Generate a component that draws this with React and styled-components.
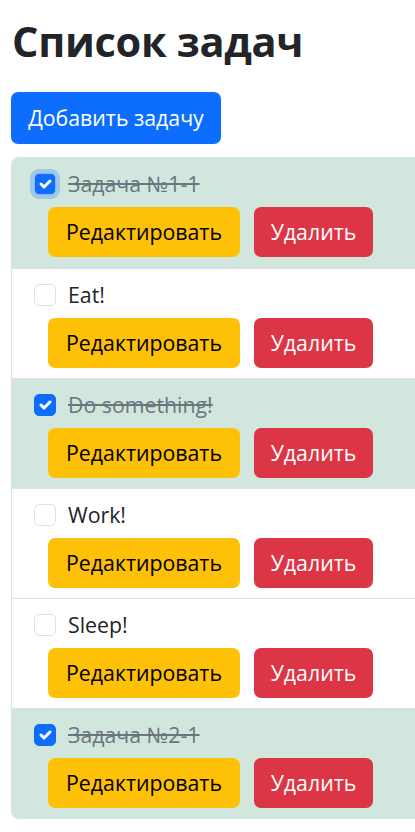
import React, { useState } from "react";
import styled, { createGlobalStyle } from "styled-components";

const Global = createGlobalStyle`
  html, body { margin: 0; padding: 0; background: #fff; overflow-x: hidden; }
  body { font-family: "Open Sans", "Noto Sans", sans-serif; color: #212529; }
  * { box-sizing: border-box; }
`;

const Page = styled.div`
  padding: 11px 0 0 11px;
  width: 100%;
  overflow: hidden;
`;

const Title = styled.h1`
  margin: 0 0 0 1px;
  font-size: 41.5px;
  font-weight: 700;
  line-height: 60px;
  color: #212529;
  letter-spacing: -0.3px;
`;

const Btn = styled.button`
  font-family: inherit;
  border: 1px solid transparent;
  border-radius: 7px;
  cursor: pointer;
  display: inline-flex;
  align-items: center;
  justify-content: center;
  line-height: 1;
  padding: 0;
  background: ${(p) => p.$bg};
  color: ${(p) => p.$fg};
`;

const AddBtn = styled(Btn)`
  margin-top: 21px;
  width: 210px;
  height: 52px;
  font-size: 21.3px;
`;

const List = styled.ul`
  list-style: none;
  margin: 13px 0 0 0;
  padding: 0;
  width: 430px;
  border: 1px solid #dee2e6;
  border-radius: 7px;
  overflow: hidden;
`;

const Item = styled.li`
  height: 110px;
  padding: 9px 16px 0;
  background: ${(p) => (p.$done ? "#d1e7dd" : "#fff")};
  border-top: ${(p) => (p.$first ? "none" : "1px solid #dee2e6")};
  display: flex;
  flex-direction: column;
`;

const CheckLine = styled.label`
  height: 32px;
  display: flex;
  align-items: center;
  gap: 12px;
  padding-left: 6px;
  font-size: 21.3px;
  cursor: pointer;
`;

const Box = styled.span`
  width: 22px;
  height: 22px;
  border-radius: 5px;
  flex: none;
  display: flex;
  align-items: center;
  justify-content: center;
  background: ${(p) => (p.$checked ? "#0d6efd" : "#fff")};
  border: 1px solid ${(p) => (p.$checked ? (p.$focus ? "#86b7fe" : "#0d6efd") : "#dee2e6")};
  box-shadow: ${(p) => (p.$focus ? "0 0 0 4px rgba(13,110,253,0.25)" : "none")};
  margin-top: 1px;
`;

const Label = styled.span`
  color: ${(p) => (p.$done ? "#6c757d" : "#212529")};
  text-decoration: ${(p) => (p.$done ? "line-through" : "none")};
  text-decoration-thickness: 2px;
`;

const Actions = styled.div`
  display: flex;
  gap: 14px;
  margin: 8px 0 0 20px;
`;

const ActionBtn = styled(Btn)`
  height: 50px;
  width: ${(p) => p.$w}px;
  font-size: 21.3px;
`;

const Check = () => (
  <svg width="20" height="20" viewBox="0 0 20 20">
    <path d="m6 10 3 3 6-6" fill="none" stroke="#fff" strokeLinecap="round" strokeLinejoin="round" strokeWidth="3" />
  </svg>
);

const initial = [
  { text: "Задача №1-1", done: true, focus: true },
  { text: "Eat!", done: false },
  { text: "Do something!", done: true },
  { text: "Work!", done: false },
  { text: "Sleep!", done: false },
  { text: "Задача №2-1", done: true },
];

export default function App() {
  const [tasks, setTasks] = useState(initial);
  const toggle = (i) =>
    setTasks((t) => t.map((x, j) => (j === i ? { ...x, done: !x.done } : x)));
  return (
    <>
      <Global />
      <Page>
        <Title>Список задач</Title>
        <AddBtn $bg="#0d6efd" $fg="#fff">Добавить задачу</AddBtn>
        <List>
          {tasks.map((t, i) => (
            <Item key={i} $done={t.done} $first={i === 0}>
              <CheckLine onClick={() => toggle(i)}>
                <Box $checked={t.done} $focus={t.focus}>{t.done && <Check />}</Box>
                <Label $done={t.done}>{t.text}</Label>
              </CheckLine>
              <Actions>
                <ActionBtn $bg="#ffc107" $fg="#000" $w={192}>Редактировать</ActionBtn>
                <ActionBtn $bg="#dc3545" $fg="#fff" $w={119}>Удалить</ActionBtn>
              </Actions>
            </Item>
          ))}
        </List>
      </Page>
    </>
  );
}
